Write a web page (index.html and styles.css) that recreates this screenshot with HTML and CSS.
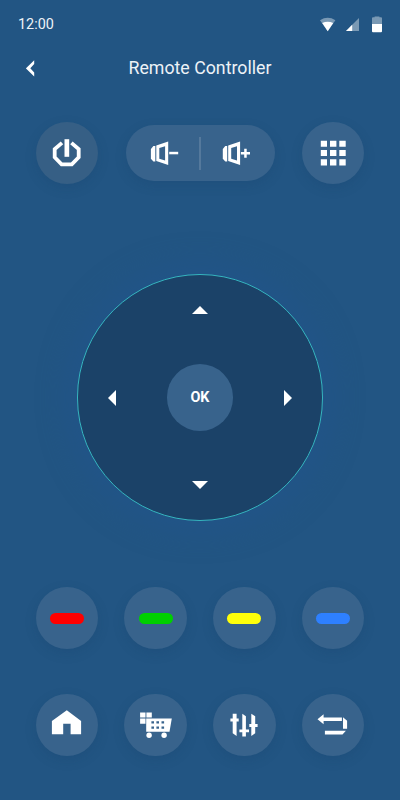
FILE: index.html
```
<!DOCTYPE html>
<html lang="en">
<head>
    <meta charset="UTF-8">
    <title>Remote Controller</title>
    <link rel="stylesheet" href="styles.css">
</head>
<body>
<div class="phone">
    <div class="status">
        <span class="time">12:00</span>
        <svg class="status-icons" viewBox="0 0 64 18">
            <path opacity=".4" d="M0 4.2Q7.7-.6 15.4 4.2L7.7 15.2z"/>
            <path d="M2.2 7Q7.7 4.6 13.2 7L7.7 15.2z"/>
            <path opacity=".4" d="M39 2v13H26z"/>
            <path d="M32.2 8.8V15H26z"/>
            <path opacity=".4" d="M52 8V2.3Q52 1.3 53 1.3h1.6V.4h4.8v.9H61q1 0 1 1V8z"/>
            <path d="M52 8h10v7.2q0 1-1 1h-8q-1 0-1-1z"/>
        </svg>
    </div>
    <header class="header">
        <svg class="back" viewBox="0 0 9 17"><path d="M8.2.2v3.9L4.3 8.3l3.9 4.2v3.9L-.1 8.3z"/></svg>
        <h1>Remote Controller</h1>
    </header>

    <div class="row top">
        <button class="btn power" aria-label="Power">
            <svg viewBox="0 0 32 32">
                <path class="line" d="M11 5.9 3.7 12.1V20.3L10.6 27.3H20.8L27.7 20.3V12.1L20.4 5.9"/>
                <path d="M13.5 2.2h4.7v17.6h-4.7z"/>
            </svg>
        </button>
        <div class="volume">
            <button aria-label="Volume down">
                <svg viewBox="0 0 32 32">
                    <path d="M8.3 9v15.6H6.4L3.9 21.8V12L6.4 9z"/>
                    <path fill-rule="evenodd" d="M9.3 8.5 21.2 4.5V28.1L9.3 24.1zM12.3 11V21.8L18.1 23.6V9.2z"/>
                    <path d="M22.2 14.8h9v2.5h-9z"/>
                </svg>
            </button>
            <span class="divider"></span>
            <button aria-label="Volume up">
                <svg viewBox="0 0 32 32">
                    <path d="M6.2 9v15.6H4.3L1.8 21.8V12L4.3 9z"/>
                    <path fill-rule="evenodd" d="M7.2 8.5 19.1 4.5V28.1L7.2 24.1zM10.2 11V21.8L16 23.6V9.2z"/>
                    <path d="M19.9 14.9h3.3v-3.2h2.5v3.2H29v2.5h-3.3v3.3h-2.5v-3.3h-3.3z"/>
                </svg>
            </button>
        </div>
        <button class="btn" aria-label="Keypad">
            <svg viewBox="0 0 32 32">
                <path d="M3.8 3.8h6.2v5.9H3.8zM13 3.8h6.4v5.9H13zM22.3 3.8h6.4v5.9h-6.4zM3.8 13h6.2v6H3.8zM13 13h6.4v6H13zM22.3 13h6.4v6h-6.4zM3.8 22.3h6.2v6.2H3.8zM13 22.3h6.4v6.2H13zM22.3 22.3h6.4v6.2h-6.4z"/>
            </svg>
        </button>
    </div>

    <div class="pad">
        <svg class="up" viewBox="0 0 16 8"><path d="M8 0l8 8H0z"/></svg>
        <svg class="left" viewBox="0 0 8 16"><path d="M8 0v16L0 8z"/></svg>
        <button class="ok">OK</button>
        <svg class="right" viewBox="0 0 8 16"><path d="M0 0l8 8-8 8z"/></svg>
        <svg class="down" viewBox="0 0 16 8"><path d="M0 0h16L8 8z"/></svg>
    </div>

    <div class="row colors">
        <button class="btn" aria-label="Red"><span class="key red"></span></button>
        <button class="btn" aria-label="Green"><span class="key green"></span></button>
        <button class="btn" aria-label="Yellow"><span class="key yellow"></span></button>
        <button class="btn" aria-label="Blue"><span class="key blue"></span></button>
    </div>

    <div class="row menu">
        <button class="btn" aria-label="Home">
            <svg viewBox="0 0 32 32"><path d="M15.8 1.3 30.1 12V25.3H19.6V14.7H12.2V25.3H.9V12z"/></svg>
        </button>
        <button class="btn" aria-label="Shop">
            <svg viewBox="0 0 32 32">
                <path d="M.1 3.6h5.4v5H.1zM6.4 3.6h5.4v5H6.4zM.1 9.5h5.4v5.2H.1z"/>
                <path fill-rule="evenodd" d="M6.2 9.4H31.8L29.5 22.7H6.2zM11.4 12.3v2.2H14v-2.2zM16.4 12.3v2.2H19v-2.2zM21.5 12.3v2.2h2.6v-2.2zM11.4 17.5v2.2H14v-2.2zM16.4 17.5v2.2H19v-2.2zM21.5 17.5v2.2h2.6v-2.2z"/>
                <circle cx="9.1" cy="26.3" r="2.7"/>
                <circle cx="24.1" cy="26.3" r="2.7"/>
            </svg>
        </button>
        <button class="btn" aria-label="Settings">
            <svg viewBox="0 0 32 32">
                <path d="M4.7 4.7H8.6V9.6H10.7V12.5H8.6V27L4.7 24.3V12.5H2.4V9.6H4.7z"/>
                <path d="M14.3 4.7 17.9 7.2V20.5H21V23.2H17.9V27.6H14.3V23.2H11.4V20.5H14.3z"/>
                <path d="M27.2 4.7V15H29.6V18H27.2V24.3L23.3 27V18H21.3V15H23.3V4.7L27.2 7.2z"/>
            </svg>
        </button>
        <button class="btn" aria-label="Return">
            <svg viewBox="0 0 32 32">
                <path d="M.5 10.3 6.6 5.3V8.6H24.9V12H6.6V15.3z"/>
                <path d="M26 8.2 30.1 11.7V19.7H26zM7.9 21.7H28.9L25.5 25.5H7.9z"/>
            </svg>
        </button>
    </div>
</div>
</body>
</html>
```
FILE: styles.css
```
* {
    box-sizing: border-box;
}
body {
    margin: 0;
    background: #225583;
    color: #fff;
    font-family: Roboto, "Liberation Sans", sans-serif;
}
svg {
    display: block;
    fill: #fff;
    flex: none;
}
button {
    border: 0;
    padding: 0;
    background: none;
    color: inherit;
    font-family: inherit;
}
.phone {
    display: flex;
    flex-direction: column;
    align-items: center;
    width: 400px;
    height: 800px;
    overflow: hidden;
}
.status {
    display: flex;
    justify-content: space-between;
    width: 100%;
    height: 48px;
    padding: 16px 16px 0 18px;
}
.time {
    font-size: 14.4px;
    line-height: 17px;
    color: #edf2f7;
}
.status-icons {
    width: 64px;
    height: 18px;
}
.header {
    display: grid;
    grid-template-columns: 9px 1fr 9px;
    align-items: center;
    width: 100%;
    height: 40px;
    padding: 0 26px;
}
.back {
    width: 9px;
    height: 17px;
}
h1 {
    margin: 0;
    text-align: center;
    font-size: 17.75px;
    font-weight: 400;
    line-height: 24px;
    color: #edf2f7;
}
.row {
    display: flex;
    justify-content: space-between;
    align-items: center;
    width: 328.6px;
}
.btn {
    display: flex;
    align-items: center;
    justify-content: center;
    width: 62.4px;
    height: 62.4px;
    border-radius: 50%;
    background: #38638c;
    box-shadow: 0 4px 12px rgba(20, 60, 100, .2);
}
.btn svg, .volume svg {
    width: 32px;
    height: 32px;
}
.power {
    background: #365f85;
}
.line {
    fill: none;
    stroke: #fff;
    stroke-width: 3.8;
}
.top {
    margin-top: 34px;
}
.volume {
    display: flex;
    align-items: center;
    width: 149px;
    height: 56px;
    border-radius: 28px;
    background: #38638c;
    box-shadow: 0 4px 12px rgba(20, 60, 100, .2);
}
.volume button {
    display: flex;
    flex: 1;
    justify-content: center;
}
.divider {
    width: 2px;
    height: 33px;
    margin: 0 -1px;
    background: #55799c;
}
.pad {
    display: grid;
    grid-template-columns: 88px 1fr 88px;
    grid-template-rows: 88px 1fr 88px;
    place-items: center;
    width: 246.6px;
    height: 246.6px;
    margin-top: 90px;
    border: 1px solid #35b5bf;
    border-radius: 50%;
    background: #1b4268;
    box-shadow: 0 0 28px 10px rgba(34, 84, 138, .75);
}
.up, .down {
    grid-column: 2;
    width: 16px;
    height: 8px;
}
.left, .right {
    width: 8px;
    height: 16px;
}
.left {
    grid-column: 1;
    margin-right: 20px;
}
.right {
    margin-left: 20px;
}
.up {
    margin-bottom: 18px;
}
.down {
    margin-top: 19px;
}
.ok {
    width: 66.6px;
    height: 66.6px;
    border-radius: 50%;
    background: #38638c;
    font-size: 14.4px;
    font-weight: 700;
}
.colors {
    margin-top: 66px;
}
.key {
    width: 34px;
    height: 10.6px;
    margin-top: 1px;
    border-radius: 6px;
}
.red {
    background: #f00;
}
.green {
    background: #00d000;
}
.yellow {
    background: #ffff0a;
}
.blue {
    background: #2e80ff;
}
.menu {
    margin-top: 44.3px;
}
```
